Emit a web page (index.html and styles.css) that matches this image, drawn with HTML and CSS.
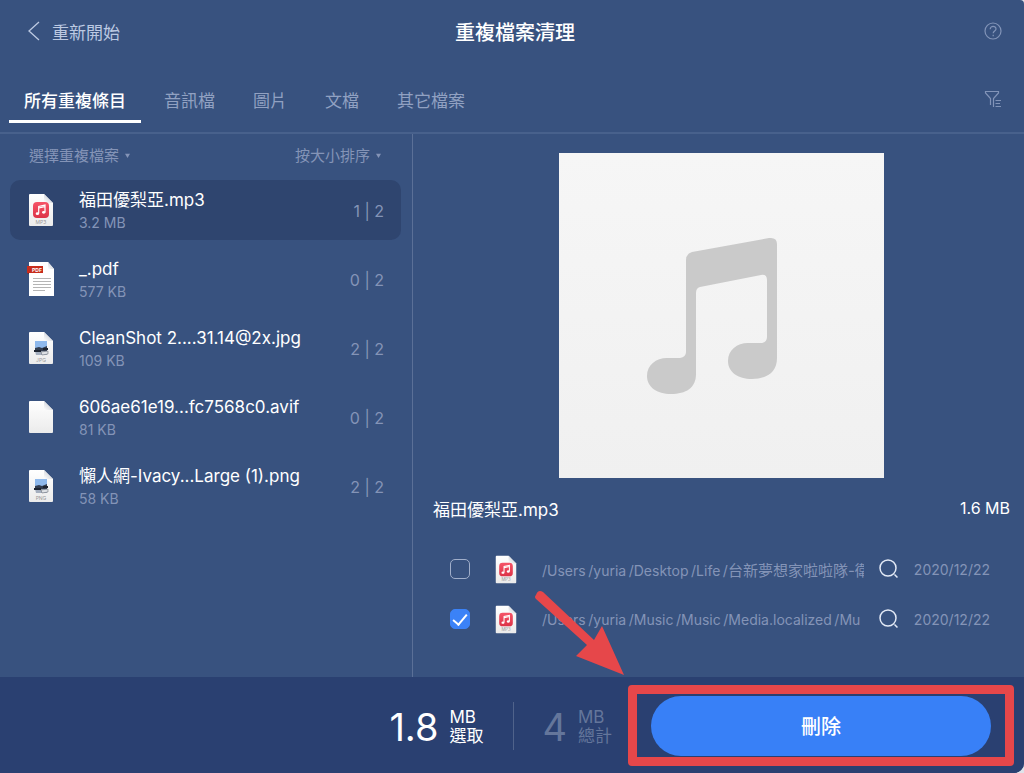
FILE: index.html
```html
<!DOCTYPE html>
<html lang="zh-Hant">
<head>
    <meta charset="UTF-8">
    <meta name="viewport" content="width=device-width, initial-scale=1.0">
    <title>重複檔案清理</title>
    <link rel="stylesheet" href="styles.css">
</head>
<body>

<!-- Shared icons -->
<svg class="icon-defs" aria-hidden="true">
    <defs>
        <linearGradient id="red" x1="0" y1="0" x2="0" y2="1">
            <stop offset="0" stop-color="#f65468"/>
            <stop offset="1" stop-color="#dc3347"/>
        </linearGradient>
        <linearGradient id="paper" x1="0" y1="0" x2="0" y2="1">
            <stop offset="0" stop-color="#ffffff"/>
            <stop offset="1" stop-color="#ebebeb"/>
        </linearGradient>
        <linearGradient id="fold" x1="0" y1="1" x2="1" y2="0">
            <stop offset="0" stop-color="#ffffff"/>
            <stop offset="1" stop-color="#b9bec8"/>
        </linearGradient>
    </defs>
    <symbol id="file" viewBox="0 0 28 34">
        <path d="M3 1h14l9 9v22a1 1 0 0 1-1 1H3a1 1 0 0 1-1-1V2a1 1 0 0 1 1-1z" fill="url(#paper)"/>
        <path d="M17 1l9 9h-8a1 1 0 0 1-1-1z" fill="url(#fold)"/>
    </symbol>
    <symbol id="music" viewBox="0 0 28 34">
        <use href="#file"/>
        <rect x="6" y="9" width="16" height="16" rx="4" fill="url(#red)"/>
        <path d="M11.7 20.5v-7l6.3-1.4v7M11.7 15l6.3-1.4" fill="none" stroke="#fff" stroke-width="1.2"/>
        <ellipse cx="10.4" cy="20.7" rx="1.7" ry="1.4" fill="#fff"/>
        <ellipse cx="16.7" cy="19.3" rx="1.7" ry="1.4" fill="#fff"/>
    </symbol>
    <symbol id="photo" viewBox="0 0 28 34">
        <use href="#file"/>
        <rect x="8" y="10" width="12" height="7" fill="#8fb9ec"/>
        <path d="M8 17l4-1 3 1 5-2v5H8z" fill="#333d4f"/>
        <path d="M8 20h12v4H9z" fill="#a5afbf"/>
        <path d="M7 19h7v2H7zM16 17h5v2h-5z" fill="#1e2430"/>
        <path d="M14 21l7-1v3l-6 1z" fill="#dfe2e6" stroke="#5b616b" stroke-width=".5"/>
    </symbol>
    <symbol id="document" viewBox="0 0 28 34">
        <path d="M2 0h19l6 7v27H2z" fill="#fff"/>
        <path d="M21 0l6 7h-6z" fill="url(#fold)"/>
        <path d="M0 4h16v7H0z" fill="#c72c1c"/>
        <path d="M0 11h2v1z" fill="#7c1a10"/>
        <path d="M6 16.5h18M6 19.5h18M6 22.5h18M6 25.5h18M6 28.5h12" stroke="#b5b5b5"/>
    </symbol>
    <symbol id="search" viewBox="0 0 20 20">
        <circle cx="9" cy="9" r="8" fill="none" stroke="currentColor" stroke-width="1.5"/>
        <path d="M15.5 15.5l3 3" stroke="currentColor" stroke-width="1.5"/>
    </symbol>
</svg>

<div class="app">
    <header class="header">
        <button class="back">
            <svg width="12" height="20" viewBox="0 0 12 20" fill="none" stroke="currentColor" stroke-width="1.3"><path d="M11 1L1 10l10 9"/></svg>
            重新開始
        </button>
        <h1>重複檔案清理</h1>
        <button class="icon-button help" aria-label="說明">
            <svg width="18" height="18" viewBox="0 0 18 18" fill="none" stroke="currentColor" stroke-width="1.2"><circle cx="9" cy="9" r="8"/><path d="M6.2 7.2C6.2 3.4 12 3.6 12 7c0 2-2.8 2-2.8 4.2M9.2 12.8v1.4"/></svg>
        </button>
    </header>

    <nav class="tabs">
        <button class="tab active">所有重複條目</button>
        <button class="tab">音訊檔</button>
        <button class="tab">圖片</button>
        <button class="tab">文檔</button>
        <button class="tab">其它檔案</button>
        <button class="icon-button filter" aria-label="篩選">
            <svg width="18" height="18" viewBox="0 0 18 18" fill="none" stroke="currentColor" stroke-width="1.2"><path d="M6.5 15V8.500L1.500 3V1.500h13V3L9.500 8.500V17M11.500 10.500H17M11.500 13.500H16M11.500 16.500H17"/></svg>
        </button>
    </nav>

    <main class="main">
        <section class="sidebar">
            <div class="toolbar">
                <label class="dropdown">
                    <select aria-label="選擇重複檔案"><option>選擇重複檔案</option></select>
                    <svg width="5" height="5" viewBox="0 0 6 6"><path d="M0 1h6L3 6z" fill="currentColor"/></svg>
                </label>
                <label class="dropdown">
                    <select aria-label="排序"><option>按大小排序</option></select>
                    <svg width="5" height="5" viewBox="0 0 6 6"><path d="M0 1h6L3 6z" fill="currentColor"/></svg>
                </label>
            </div>
            <ul class="files">
                <li class="file selected">
                    <svg class="file-icon" viewBox="0 0 28 34"><use href="#music"/><text x="14" y="31" class="file-label">MP3</text></svg>
                    <div class="file-info"><div class="file-name">福田優梨亞.mp3</div><div class="file-size">3.2 MB</div></div>
                    <div class="count">1 | 2</div>
                </li>
                <li class="file">
                    <svg class="file-icon" viewBox="0 0 28 34"><use href="#document"/><text x="10" y="10" class="pdf-label">PDF</text></svg>
                    <div class="file-info"><div class="file-name">_.pdf</div><div class="file-size">577 KB</div></div>
                    <div class="count">0 | 2</div>
                </li>
                <li class="file">
                    <svg class="file-icon" viewBox="0 0 28 34"><use href="#photo"/><text x="14" y="31" class="file-label">JPG</text></svg>
                    <div class="file-info"><div class="file-name">CleanShot 2....31.14@2x.jpg</div><div class="file-size">109 KB</div></div>
                    <div class="count">2 | 2</div>
                </li>
                <li class="file">
                    <svg class="file-icon" viewBox="0 0 28 34"><use href="#file"/></svg>
                    <div class="file-info"><div class="file-name">606ae61e19...fc7568c0.avif</div><div class="file-size">81 KB</div></div>
                    <div class="count">0 | 2</div>
                </li>
                <li class="file">
                    <svg class="file-icon" viewBox="0 0 28 34"><use href="#photo"/><text x="14" y="31" class="file-label">PNG</text></svg>
                    <div class="file-info"><div class="file-name">懶人網-Ivacy...Large (1).png</div><div class="file-size">58 KB</div></div>
                    <div class="count">2 | 2</div>
                </li>
            </ul>
        </section>

        <section class="detail">
            <div class="preview">
                <svg viewBox="0 0 325 325" fill="#cacaca"><path d="M127 107Q127 101 133 99L210 85Q218 84 218 91V205C218 219 208 226 193 226C179 226 169 219 169 208C169 197 178 190 189 190H203Q208 189 208 184V127Q208 121 202 122L141 134Q137 135 137 140V221C137 235 127 241 112 241C98 241 88 234 88 223C88 212 97 205 108 205H121Q127 204 127 199Z"/></svg>
            </div>
            <div class="detail-title">
                <span>福田優梨亞.mp3</span>
                <span class="detail-size">1.6 MB</span>
            </div>
            <div class="copies">
                <div class="copy">
                    <input type="checkbox" id="copy1" class="check">
                    <svg class="copy-icon" viewBox="0 0 28 34"><use href="#music"/><text x="14" y="31" class="file-label">MP3</text></svg>
                    <label for="copy1" class="path">/Users&thinsp;/yuria&thinsp;/Desktop&thinsp;/Life&thinsp;/<span class="folder">台新夢想家啦啦隊-衛</span></label>
                    <button class="search" aria-label="顯示位置"><svg width="20" height="20"><use href="#search"/></svg></button>
                    <span class="date">2020/12/22</span>
                </div>
                <div class="copy">
                    <input type="checkbox" id="copy2" class="check" checked>
                    <svg class="copy-icon" viewBox="0 0 28 34"><use href="#music"/><text x="14" y="31" class="file-label">MP3</text></svg>
                    <label for="copy2" class="path">/Users&thinsp;/yuria&thinsp;/Music&thinsp;/Music&thinsp;/Media.localized&thinsp;/Mu</label>
                    <button class="search" aria-label="顯示位置"><svg width="20" height="20"><use href="#search"/></svg></button>
                    <span class="date">2020/12/22</span>
                </div>
            </div>
        </section>
    </main>

    <footer class="footer">
        <div class="stat">
            <span class="number">1.8</span>
            <span class="unit">MB<br>選取</span>
        </div>
        <div class="stat total">
            <span class="number">4</span>
            <span class="unit">MB<br>總計</span>
        </div>
        <div class="delete-wrap">
            <button class="delete">刪除</button>
            <!-- Arrow pointing at the delete button -->
            <svg class="arrow" width="92" height="88" viewBox="0 0 92 88"><path d="M2 5Q4 -1 9 2L60 50L68 36L90 85L42 66L53 55L2 9Q0 7 2 5Z" fill="#e6474a"/></svg>
        </div>
    </footer>
</div>

</body>
</html>
```
FILE: styles.css
```css
* {
    box-sizing: border-box;
}

body {
    margin: 0;
    background-color: #dfe3ea;
    color: #fff;
    font-family: Inter, "Noto Sans CJK TC", sans-serif;
    font-size: 17px;
}

button {
    padding: 0;
    border: none;
    background: none;
    color: inherit;
    font: inherit;
    cursor: pointer;
}

svg {
    display: block;
    flex-shrink: 0;
}

.icon-defs {
    position: absolute;
    width: 0;
    height: 0;
}

.app {
    display: flex;
    flex-direction: column;
    min-height: 100vh;
    background-color: #38527f;
    border-radius: 0 4px 10px 0;
    overflow: hidden;
}

/* Header */
.header {
    display: grid;
    grid-template-columns: 1fr auto 1fr;
    align-items: center;
    height: 62px;
    padding: 0 22px 0 28px;
}

.back {
    display: flex;
    align-items: center;
    gap: 12px;
    justify-self: start;
    color: #bcc9e2;
}

h1 {
    margin: 0;
    font-size: 20px;
    font-weight: 500;
}

.icon-button {
    color: #8294b8;
}

.help {
    justify-self: end;
}

/* Tabs */
.tabs {
    display: flex;
    align-items: flex-start;
    gap: 8px;
    height: 72px;
    padding: 16px 22px 0 9px;
    border-bottom: 2px solid #48618c;
}

.tab {
    height: 45px;
    padding: 0 15px;
    border-bottom: 3px solid transparent;
    color: #91a1c2;
}

.tab.active {
    border-bottom-color: #fff;
    color: #fff;
    font-weight: 500;
}

.filter {
    margin: 12px 0 0 auto;
}

/* File list */
.main {
    display: grid;
    grid-template-columns: minmax(300px, 413px) 1fr;
    flex: 1;
}

.sidebar {
    padding: 9px 11px 0 10px;
    border-right: 1px solid #5b7097;
}

.toolbar {
    display: flex;
    justify-content: space-between;
    height: 24px;
    padding: 0 20px 0 19px;
}

.dropdown {
    display: flex;
    align-items: center;
    gap: 5px;
    color: #8494b7;
}

select {
    appearance: none;
    padding: 0;
    border: none;
    background: none;
    color: inherit;
    font: inherit;
    font-size: 15px;
}

.files {
    display: grid;
    gap: 9px;
    margin: 13px 0 0;
    padding: 0;
    list-style: none;
}

.file {
    display: flex;
    align-items: center;
    height: 60px;
    padding: 0 17px;
    border-radius: 10px;
}

.file.selected {
    background-color: #2f456f;
}

.file-icon {
    width: 28px;
    height: 34px;
}

.file-info {
    flex: 1;
    min-width: 0;
    margin-left: 24px;
    padding-top: 2px;
}

.file-name {
    font-size: 17px;
    line-height: 24px;
    white-space: nowrap;
}

.file-size {
    color: #8494b7;
    font-size: 14px;
    line-height: 22px;
}

.count {
    padding-top: 2px;
    color: #8494b7;
    font-size: 16px;
}

.file-label {
    fill: #999;
    font-size: 5px;
    text-anchor: middle;
}

.pdf-label {
    fill: #fff;
    font-size: 5px;
    font-weight: 700;
    text-anchor: middle;
}

/* Detail */
.detail {
    min-width: 0;
    padding: 19px 14px 0 20px;
}

.preview {
    width: 325px;
    max-width: 100%;
    margin: 0 auto;
    background: linear-gradient(#f6f6f6, #f0f0f0);
}

.detail-title {
    display: flex;
    justify-content: space-between;
    align-items: center;
    height: 24px;
    margin-top: 18px;
}

.detail-size {
    font-size: 16px;
}

.copies {
    margin-top: 24px;
    padding: 0 20px 0 17px;
}

.copy {
    display: flex;
    align-items: center;
    height: 50px;
    color: #8494b7;
    font-size: 14px;
}

.check {
    display: grid;
    place-items: center;
    flex-shrink: 0;
    appearance: none;
    width: 20px;
    height: 20px;
    margin: 0;
    border: 1px solid #a0aeca;
    border-radius: 5px;
}

.check:checked {
    border-color: #3b82f7;
    background-color: #3b82f7;
}

.check:checked::before {
    content: "";
    width: 6px;
    height: 12px;
    margin-bottom: 3px;
    border: solid #fff;
    border-width: 0 2px 2px 0;
    transform: rotate(40deg);
}

.copy-icon {
    width: 24px;
    height: 29px;
    margin-left: 24px;
}

.path {
    flex: 1;
    min-width: 0;
    margin-left: 24px;
    overflow: hidden;
    white-space: nowrap;
}

.folder {
    font-size: 15px;
}

.search {
    margin: 0 15px;
    color: #e3eaf6;
}

/* Footer */
.footer {
    display: flex;
    justify-content: flex-end;
    align-items: center;
    height: 96px;
    padding: 1px 33px 0 0;
    background-color: #2a4071;
}

.stat {
    display: flex;
    align-items: center;
    gap: 11px;
    height: 48px;
    padding: 3px 30px 0 0;
}

.total {
    padding: 3px 39px 0 28px;
    border-left: 1px solid #50638b;
    color: #64769b;
}

.number {
    font-size: 38px;
}

.unit {
    font-size: 17px;
    line-height: 19px;
}

.delete-wrap {
    position: relative;
    flex: 0 1 340px;
}

/* Red highlight frame */
.delete-wrap::after {
    content: "";
    position: absolute;
    inset: -11px -23px -10px -23px;
    border: 9px solid #e6474a;
    border-radius: 4px;
    pointer-events: none;
}

.delete {
    width: 100%;
    height: 60px;
    border-radius: 30px;
    background-color: #3880f7;
    font-size: 20px;
    font-weight: 500;
}

.arrow {
    position: absolute;
    left: -117px;
    bottom: 78px;
    pointer-events: none;
}
```
